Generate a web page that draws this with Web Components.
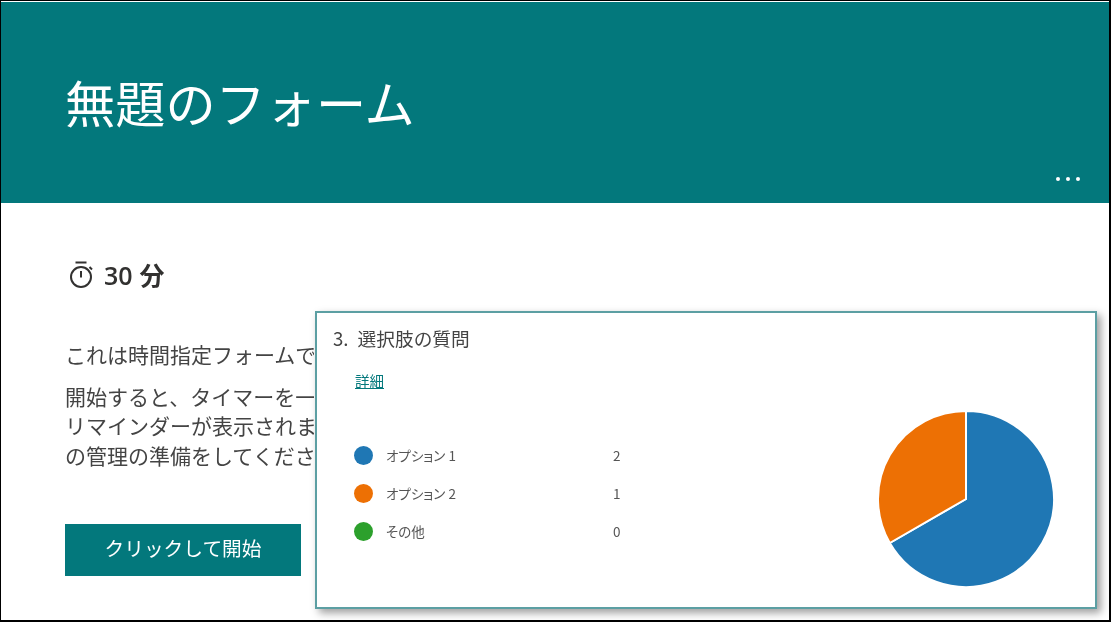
<!DOCTYPE html>
<html lang="ja">
<head>
<meta charset="utf-8">
<title>無題のフォーム</title>
<style>
    html, body {
        margin: 0;
        padding: 0;
        background: #fff;
        font-family: "Noto Sans CJK JP", "Open Sans", sans-serif;
    }
</style>
</head>
<body>

<form-page>
    <form-header slot="header" title-text="無題のフォーム"></form-header>
    <form-intro slot="intro" minutes="30" unit="分">
        <p>これは時間指定フォームで</p>
        <p>開始すると、タイマーを一<br>リマインダーが表示されま<br>の管理の準備をしてくださ</p>
    </form-intro>
    <result-panel slot="panel" number="3." heading="選択肢の質問" link="詳細">
        <legend-row color="#1f77b4" label="オプション" suffix="1" count="2"></legend-row>
        <legend-row color="#ed7004" label="オプション" suffix="2" count="1"></legend-row>
        <legend-row color="#2ca02c" label="その他" count="0"></legend-row>
    </result-panel>
</form-page>

<script>
class FormPage extends HTMLElement {
    constructor() {
        super();
        this.attachShadow({ mode: "open" });
        this.shadowRoot.innerHTML = `
            <style>
                :host {
                    display: flex;
                    flex-direction: column;
                    position: relative;
                    box-sizing: border-box;
                    width: 1111px;
                    height: 622px;
                    overflow: hidden;
                    background: #fff;
                    border: solid #000;
                    border-width: 1px 2px 2px 1px;
                    filter: blur(.3px);
                }
                .panel {
                    position: absolute;
                    left: 314px;
                    top: 310px;
                }
            </style>
            <slot name="header"></slot>
            <slot name="intro"></slot>
            <div class="panel"><slot name="panel"></slot></div>
        `;
    }
}

class FormHeader extends HTMLElement {
    constructor() {
        super();
        this.attachShadow({ mode: "open" });
        this.shadowRoot.innerHTML = `
            <style>
                :host {
                    display: flex;
                    align-items: center;
                    position: relative;
                    box-sizing: border-box;
                    height: 201px;
                    margin-top: 1px;
                    padding: 0 0 3px 64px;
                    background: #03787c;
                    color: #fff;
                }
                h1 {
                    margin: 0;
                    font-size: 50.2px;
                    font-weight: 400;
                    line-height: 1.2;
                    white-space: nowrap;
                }
                .more {
                    position: absolute;
                    right: 29px;
                    bottom: 22px;
                    display: flex;
                    gap: 6px;
                }
                .more i {
                    width: 4px;
                    height: 4px;
                    border-radius: 50%;
                    background: #fff;
                }
            </style>
            <h1>${this.getAttribute("title-text")}</h1>
            <div class="more"><i></i><i></i><i></i></div>
        `;
    }
}

class FormIntro extends HTMLElement {
    constructor() {
        super();
        this.attachShadow({ mode: "open" });
        this.shadowRoot.innerHTML = `
            <style>
                :host {
                    display: flex;
                    flex-direction: column;
                    align-items: flex-start;
                    padding: 51px 0 0 67px;
                    color: #444;
                }
                .time {
                    display: flex;
                    align-items: center;
                    gap: 10px;
                    height: 40px;
                    font-size: 25px;
                    font-weight: 600;
                    color: #323130;
                }
                .time b {
                    font-family: "Open Sans", sans-serif;
                    font-weight: 600;
                    margin-right: 7px;
                }
                .time em {
                    font-style: normal;
                    font-weight: 700;
                }
                svg {
                    display: block;
                    width: 26px;
                    height: 28px;
                }
                .text {
                    margin: 46px 0 0 -3px;
                    font-size: 21px;
                    line-height: 29.6px;
                    white-space: nowrap;
                    width: 249px;
                    overflow: hidden;
                }
                ::slotted(p) {
                    margin: 0 0 12px;
                }
                button {
                    margin: 42px 0 0 -3px;
                    width: 236px;
                    height: 52px;
                    padding: 0 0 6px;
                    border: 0;
                    background: #03787c;
                    color: #fff;
                    font: inherit;
                    font-size: 19.7px;
                }
            </style>
            <div class="time">
                <svg viewBox="0 0 26 28" fill="none" stroke="#323130" stroke-width="2">
                    <circle cx="13" cy="17" r="10"/>
                    <path d="M7.5 2.5h11M13 11v6.5M21.5 7l2.5 2.5"/>
                </svg>
                <span><b>${this.getAttribute("minutes")}</b><em>${this.getAttribute("unit")}</em></span>
            </div>
            <div class="text"><slot></slot></div>
            <button type="button">クリックして開始</button>
        `;
    }
}

class ResultPanel extends HTMLElement {
    constructor() {
        super();
        this.attachShadow({ mode: "open" });
        this.shadowRoot.innerHTML = `
            <style>
                :host {
                    display: block;
                    position: relative;
                    box-sizing: border-box;
                    width: 782px;
                    height: 298px;
                    padding: 12px 16px;
                    background: #fff;
                    border: 2px solid #5c9fa3;
                    box-shadow: 4px 4px 8px rgba(0, 0, 0, .38);
                    color: #444;
                }
                .q {
                    font-size: 18.7px;
                    line-height: 26px;
                }
                .q span { margin-right: 9px; }
                a {
                    display: inline-block;
                    margin: 20px 0 0 22px;
                    font-size: 14.5px;
                    line-height: 20px;
                    color: #03787c;
                    text-decoration: underline;
                }
                .rows {
                    display: flex;
                    flex-direction: column;
                    gap: 18px;
                    margin: 53px 0 0 21px;
                }
                svg {
                    position: absolute;
                    left: 560px;
                    top: 97px;
                    width: 178px;
                    height: 178px;
                }
            </style>
            <div class="q"><span>${this.getAttribute("number")}</span>${this.getAttribute("heading")}</div>
            <a href="#">${this.getAttribute("link")}</a>
            <div class="rows"><slot></slot></div>
            <svg viewBox="-89 -89 178 178">
                <path d="M0 0V-88A88 88 0 1 1 -76.2 44Z" fill="#1f77b4" stroke="#fff" stroke-width="2"/>
                <path d="M0 0L-76.2 44A88 88 0 0 1 0 -88Z" fill="#ed7004" stroke="#fff" stroke-width="2"/>
            </svg>
        `;
    }
}

class LegendRow extends HTMLElement {
    constructor() {
        super();
        this.attachShadow({ mode: "open" });
        const suffix = this.getAttribute("suffix");
        this.shadowRoot.innerHTML = `
            <style>
                :host {
                    display: flex;
                    align-items: center;
                    height: 20px;
                    font-size: 13.5px;
                    color: #555;
                }
                i {
                    width: 19px;
                    height: 19px;
                    border-radius: 50%;
                    background: ${this.getAttribute("color")};
                    margin-right: 13px;
                }
                .label {
                    width: 227px;
                    font-feature-settings: "palt";
                    white-space: pre;
                }
            </style>
            <i></i>
            <span class="label">${this.getAttribute("label")}${suffix ? " " + suffix : ""}</span>
            <span>${this.getAttribute("count")}</span>
        `;
    }
}

customElements.define("form-header", FormHeader);
customElements.define("form-intro", FormIntro);
customElements.define("legend-row", LegendRow);
customElements.define("result-panel", ResultPanel);
customElements.define("form-page", FormPage);
</script>
</body>
</html>
